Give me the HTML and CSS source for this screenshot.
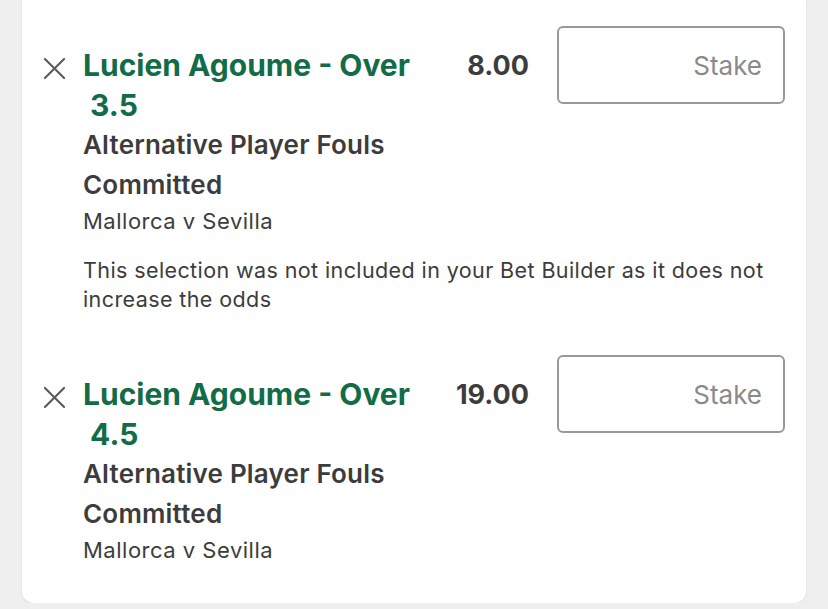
FILE: index.html
```html
<!DOCTYPE html>
<html>
<head>
<meta charset="utf-8">
<link rel="stylesheet" href="styles.css">
</head>
<body>
<div class="card">
  <div class="bet">
    <button class="remove" aria-label="Remove">
      <svg viewBox="0 0 24 24" width="24" height="24"><path d="M2 2 L22 22 M22 2 L2 22" stroke="#5a5a5a" stroke-width="2.2" fill="none" stroke-linecap="round"/></svg>
    </button>
    <div class="info">
      <div class="title">Lucien Agoume - Over &nbsp;3.5</div>
      <div class="market">Alternative Player Fouls Committed</div>
      <div class="event">Mallorca v Sevilla</div>
    </div>
    <div class="odds">8.00</div>
    <div class="stake">Stake</div>
    <div class="note">This selection was not included in your Bet Builder as it does not increase the odds</div>
  </div>
  <div class="bet">
    <button class="remove" aria-label="Remove">
      <svg viewBox="0 0 24 24" width="24" height="24"><path d="M2 2 L22 22 M22 2 L2 22" stroke="#5a5a5a" stroke-width="2.2" fill="none" stroke-linecap="round"/></svg>
    </button>
    <div class="info">
      <div class="title">Lucien Agoume - Over &nbsp;4.5</div>
      <div class="market">Alternative Player Fouls Committed</div>
      <div class="event">Mallorca v Sevilla</div>
    </div>
    <div class="odds">19.00</div>
    <div class="stake">Stake</div>
  </div>
</div>
</body>
</html>
```

FILE: styles.css
```css
html, body {
  margin: 0;
  padding: 0;
  background: #efeff0;
  font-family: Inter, "Noto Sans", sans-serif;
}
.card {
  margin: 0 22px;
  background: #ffffff;
  border-radius: 0 0 12px 12px;
  box-shadow: 0 1px 3px rgba(0,0,0,0.08);
  padding: 26px 21px 40px 21px;
  height: 603px;
  box-sizing: border-box;
}
.bet {
  display: grid;
  grid-template-columns: 40px 356px 1fr 228px;
  column-gap: 0;
  align-items: start;
}
.bet + .bet {
  margin-top: 41px;
}
.remove {
  border: 0;
  background: none;
  padding: 0;
  margin-top: 30px;
  width: 24px;
  height: 24px;
  display: block;
}
.remove svg { display: block; width: 23px; height: 23px; }
.info {
  padding-top: 19px;
  color: #3c3c3c;
}
.title {
  font-size: 30px;
  font-weight: 700;
  line-height: 40px;
  color: #126c48;
}
.market {
  font-size: 26px;
  font-weight: 600;
  line-height: 40px;
  letter-spacing: 0.2px;
}
.event {
  font-size: 22px;
  line-height: 33px;
  letter-spacing: 0.5px;
}
.odds {
  padding-top: 20px;
  font-size: 27px;
  font-weight: 700;
  line-height: 40px;
  color: #3c3c3c;
  text-align: right;
  padding-right: 28px;
}
.stake {
  height: 78px;
  box-sizing: border-box;
  border: 2px solid #999999;
  border-radius: 6px;
  font-size: 26px;
  color: #8a8a8a;
  display: flex;
  align-items: center;
  justify-content: flex-end;
  padding-right: 21px;
}
.note {
  grid-column: 2 / 5;
  margin-top: 18px;
  font-size: 21.5px;
  line-height: 29px;
  letter-spacing: 0.4px;
  color: #3c3c3c;
}
```
